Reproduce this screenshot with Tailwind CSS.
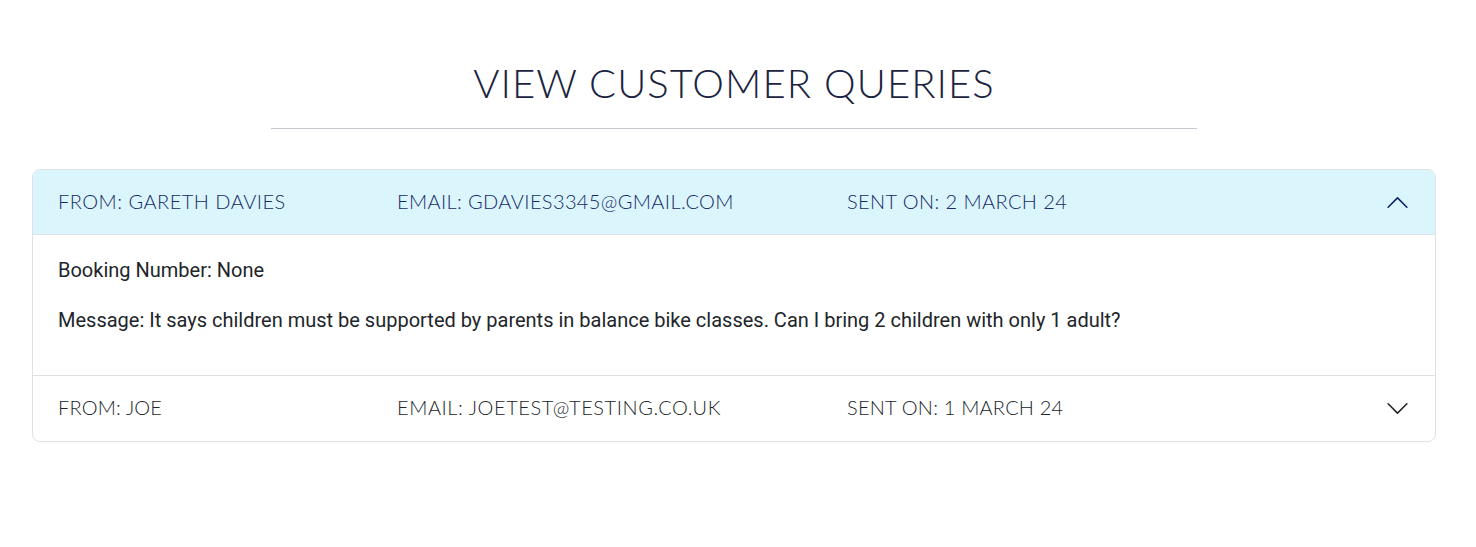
<!DOCTYPE html>
<html lang="en">
<head>
<meta charset="utf-8">
<title>View Customer Queries</title>
<script src="https://cdn.jsdelivr.net/npm/@tailwindcss/browser@4"></script>
</head>
<body class="bg-white font-['Roboto',sans-serif] text-[#212529]">
<main class="pl-8 pr-10 pt-[55px]">
  <h1 class="h-[73px] text-center font-['Lato',sans-serif] text-[40px] leading-[56px] font-light uppercase text-[#1b2340]"><span class="tracking-[1.07px]">View Customer Queries</span></h1>
  <hr class="mx-auto w-[926px] border-t border-[#c6c8d0]">
  <section class="mt-10 overflow-hidden rounded-lg border border-[#dee2e6]">
    <h2 class="flex h-16 items-center bg-[#dbf5fd] pl-[25px] pr-[25px] font-['Lato',sans-serif] text-[20px] font-light uppercase text-[#152a63]">
      <span class="w-[339px] pb-0.5"><span class="tracking-[0.47px]">From: Gareth Davies</span></span>
      <span class="w-[450px] pb-0.5"><span class="tracking-[0.37px]">Email: gdavies3345@gmail.com</span></span>
      <span class="grow pb-0.5"><span class="tracking-[0.4px]">Sent on: 2 March 24</span></span>
      <svg class="size-[25px]" viewBox="0 0 16 16" fill="#0b2265"><path fill-rule="evenodd" d="M1.646 11.354a.5.5 0 0 0 .708 0L8 5.707l5.646 5.647a.5.5 0 0 0 .708-.708l-6-6a.5.5 0 0 0-.708 0l-6 6a.5.5 0 0 0 0 .708z"/></svg>
    </h2>
    <div class="h-[142px] border-y border-[#dee2e6] px-[25px] pt-[21px] text-[20px] leading-7">
      <p class="mb-[22px]">Booking Number: None</p>
      <p>Message: It says children must be supported by parents in balance bike classes. Can I bring 2 children with only 1 adult?</p>
    </div>
    <h2 class="flex h-[65px] items-center pl-[25px] pr-[25px] font-['Lato',sans-serif] text-[20px] font-light uppercase text-[#212529]">
      <span class="w-[339px] pb-[3px]"><span class="tracking-[0.15px]">From: Joe</span></span>
      <span class="w-[450px] pb-[3px]"><span class="tracking-[0.56px]">Email: joetest@testing.co.uk</span></span>
      <span class="grow pb-[3px]"><span class="tracking-[0.2px]">Sent on: 1 March 24</span></span>
      <svg class="size-[25px]" viewBox="0 0 16 16" fill="#212529"><path fill-rule="evenodd" d="M1.646 4.646a.5.5 0 0 1 .708 0L8 10.293l5.646-5.647a.5.5 0 0 1 .708.708l-6 6a.5.5 0 0 1-.708 0l-6-6a.5.5 0 0 1 0-.708z"/></svg>
    </h2>
  </section>
</main>
</body>
</html>
